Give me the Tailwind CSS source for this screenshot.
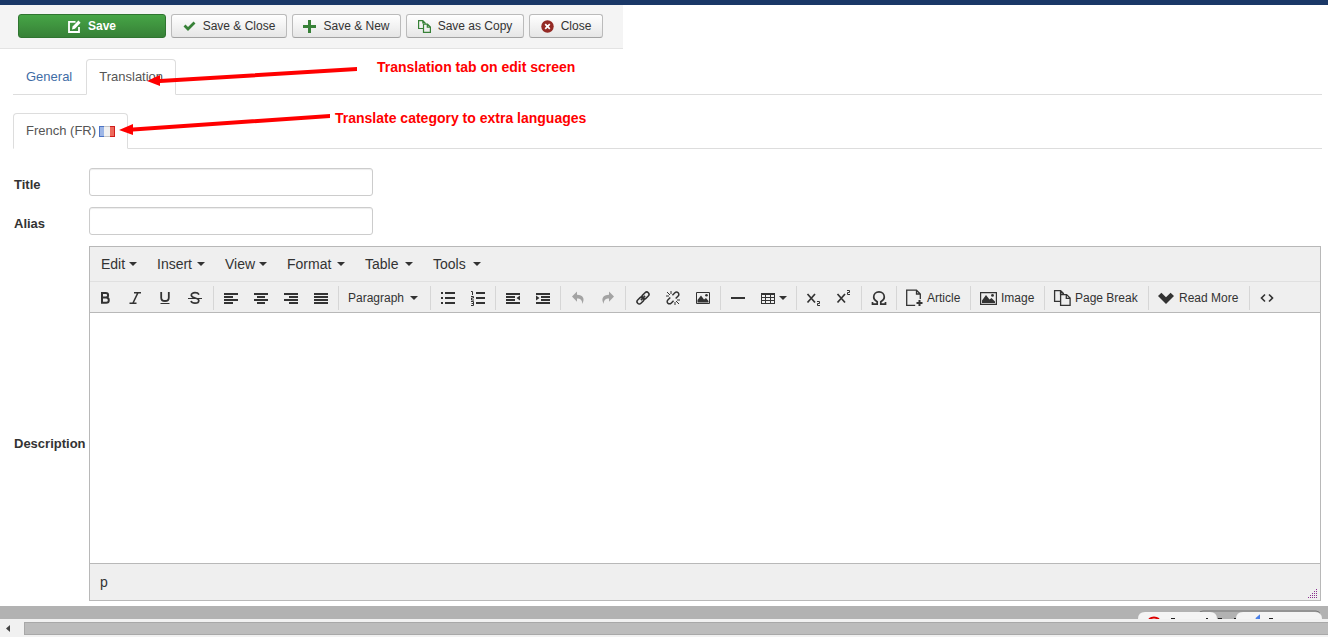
<!DOCTYPE html>
<html lang="en">
<head>
<meta charset="utf-8">
<meta name="viewport" content="width=device-width, initial-scale=1">
<title>Edit category</title>
<script src="https://cdn.jsdelivr.net/npm/@tailwindcss/browser@4"></script>
</head>
<body class="min-h-screen flex flex-col overflow-hidden bg-white text-[13px] leading-[18px] text-[#333] font-['Liberation_Sans',Arial,sans-serif]">
<svg class="hidden">
  <defs>
    <symbol id="bold" viewBox="0 0 18 18"><path d="M6 4h3.800a2.200 2.200 0 0 1 0 4.600H6zM6 8.600h4.200a2.500 2.500 0 0 1 0 5.200H6z" fill="none" stroke="currentColor" stroke-width="2"/></symbol>
    <symbol id="italic" viewBox="0 0 18 18"><path d="M8 3.800h7M3.500 14.200h7M11.800 4l-4.800 10" fill="none" stroke="currentColor" stroke-width="1.600"/></symbol>
    <symbol id="underline" viewBox="0 0 18 18"><path d="M5.200 3v5.700q0 3.300 3.800 3.300t3.800-3.300V3" fill="none" stroke="currentColor" stroke-width="1.800"/><path d="M4.500 14.500h9" stroke="currentColor"/></symbol>
    <symbol id="strike" viewBox="0 0 18 18"><path d="M13 5.600C12.300 4.200 10.900 3.700 9 3.700c-2.100 0-3.700.9-3.700 2.500 0 3.400 7.500 2.100 7.500 5.300 0 1.700-1.600 2.700-3.800 2.700-2 0-3.500-.8-4-2.200" fill="none" stroke="currentColor" stroke-width="1.700"/><path d="M2 9.500h14" stroke="currentColor"/></symbol>
    <symbol id="left" viewBox="0 0 18 18"><path d="M2 4h14v2H2zM2 7h9v2H2zM2 10h14v2H2zM2 13h9v2H2z" fill="currentColor"/></symbol>
    <symbol id="center" viewBox="0 0 18 18"><path d="M2 4h14v2H2zM5 7h8v2H5zM2 10h14v2H2zM5 13h8v2H5z" fill="currentColor"/></symbol>
    <symbol id="right" viewBox="0 0 18 18"><path d="M2 4h14v2H2zM7 7h9v2H7zM2 10h14v2H2zM7 13h9v2H7z" fill="currentColor"/></symbol>
    <symbol id="justify" viewBox="0 0 18 18"><path d="M2 4h14v2H2zM2 7h14v2H2zM2 10h14v2H2zM2 13h14v2H2z" fill="currentColor"/></symbol>
    <symbol id="bullets" viewBox="0 0 18 18"><path d="M6 3h10v2H6zM6 8h10v2H6zM6 13h10v2H6zM2 3h2v2H2zM2 8h2v2H2zM2 13h2v2H2z" fill="currentColor"/></symbol>
    <symbol id="numbers" viewBox="0 0 18 18"><path d="M7 3h9v2H7zM7 8h9v2H7zM7 13h9v2H7z" fill="currentColor"/><path d="M2 2.500h1.500V6M2 7.500h2.500v1.500H2.500v2H5M2 12.500h2.500v4H2M2.500 14.500h2" fill="none" stroke="currentColor"/></symbol>
    <symbol id="outdent" viewBox="0 0 18 18"><path d="M2 4h14v2H2zM2 7h9v2H2zM2 10h9v2H2zM2 13h14v2H2zM16 6.500v5L12.500 9z" fill="currentColor"/></symbol>
    <symbol id="indent" viewBox="0 0 18 18"><path d="M2 4h14v2H2zM7 7h9v2H7zM7 10h9v2H7zM2 13h14v2H2zM2 6.500v5L5.500 9z" fill="currentColor"/></symbol>
    <symbol id="undo" viewBox="0 0 18 18"><path d="M8 2.500v3.300c6 0 8.300 4 5.200 9.200.2-3.700-1.700-5.500-5.200-5.500v3.300L3 7.600z" fill="currentColor"/></symbol>
    <symbol id="redo" viewBox="0 0 18 18"><path d="M10 2.500v3.300c-6 0-8.300 4-5.200 9.200-.2-3.700 1.700-5.500 5.200-5.500v3.300l5-5.200z" fill="currentColor"/></symbol>
    <symbol id="link" viewBox="0 0 18 18"><g fill="none" stroke="currentColor" stroke-width="1.500" transform="rotate(-45 9 9)"><rect x="1.500" y="6.700" width="8" height="4.600" rx="2.300"/><rect x="8.500" y="6.700" width="8" height="4.600" rx="2.300"/><path d="M6 9h6"/></g></symbol>
    <symbol id="unlink" viewBox="0 0 18 18"><g fill="none" stroke="currentColor" stroke-width="1.500" transform="rotate(-45 9 9)"><path d="M7.500 6.700H4a2.300 2.300 0 0 0 0 4.600h3.500M10.500 6.700H14a2.300 2.300 0 0 1 0 4.600h-3.500"/></g><path d="M3 3l3 3M7 2v3M2 7h3M15 15l-3-3M11 16v-3M16 11h-3" stroke="currentColor" fill="none"/></symbol>
    <symbol id="picture" viewBox="0 0 18 18"><path d="M2.500 3.500h13v11h-13z" fill="none" stroke="currentColor"/><path d="M3.500 13.500V11L7 6.500l3 4L12 9l2.500 3v1.500z" fill="currentColor"/><circle cx="12.500" cy="6.200" r="1.300" fill="currentColor"/></symbol>
    <symbol id="rule" viewBox="0 0 18 18"><path d="M2 8h14v2H2z" fill="currentColor"/></symbol>
    <symbol id="table" viewBox="0 0 18 18"><path d="M2 4h14v11H2zM3 6v2h3V6zm4 0v2h4V6zm5 0v2h3V6zM3 9v2h3V9zm4 0v2h4V9zm5 0v2h3V9zM3 12v2h3v-2zm4 0v2h4v-2zm5 0v2h3v-2z" fill="currentColor" fill-rule="evenodd"/></symbol>
    <symbol id="sub" viewBox="0 0 18 18"><path d="M2.500 5l7.500 8.500M10 5l-7.500 8.500" stroke="currentColor" stroke-width="1.700"/><path d="M12 12.500h2.500v2h-2v2H15" fill="none" stroke="currentColor"/></symbol>
    <symbol id="sup" viewBox="0 0 18 18"><path d="M2.500 5l7.500 8.500M10 5l-7.500 8.500" stroke="currentColor" stroke-width="1.700"/><path d="M12 1.500h2.500v2h-2v2H15" fill="none" stroke="currentColor"/></symbol>
    <symbol id="omega" viewBox="0 0 18 18"><path d="M2.500 13v2.200h4.700v-2.500C5.200 11.700 3.700 10.200 3.700 8c0-3 2.300-5.200 5.300-5.200s5.300 2.200 5.300 5.200c0 2.200-1.500 3.700-3.500 4.700v2.500h4.700V13" fill="none" stroke="currentColor" stroke-width="1.700"/></symbol>
    <symbol id="article" viewBox="0 0 18 18"><path d="M15.300 10V5l-3.800-3.800H1.700v15.100h8.500M11.500 1.200V5h3.800" fill="none" stroke="currentColor" stroke-width="1.300"/><path d="M14.500 11v6M11.500 14h6" stroke="currentColor" stroke-width="2"/></symbol>
    <symbol id="photo" viewBox="0 0 18 18"><path d="M1.600 3.600h15.800v11.800H1.600z" fill="none" stroke="currentColor" stroke-width="1.200"/><path d="M3 14v-2.500L7 6l3.500 4.500L12.500 9l3.500 3.500V14z" fill="currentColor"/><circle cx="13.500" cy="6.400" r="1.400" fill="currentColor"/></symbol>
    <symbol id="copy" viewBox="0 0 18 18"><path d="M7.500 12.300H1.600V1.600h6l3.200 3.200M7.500 1.600v3.600H11M7.600 5.600h6l3.500 3.500v7.300H7.600zM13.300 5.600v3.700H17" fill="none" stroke="currentColor" stroke-width="1.300"/></symbol>
    <symbol id="down" viewBox="0 0 18 18"><path d="M1 7l3.400-3.200L9 8.300l4.600-4.500L17 7l-8 8z" fill="currentColor"/></symbol>
    <symbol id="code" viewBox="0 0 18 18"><path d="M7 5.500L3.500 9 7 12.500M11 5.500L14.500 9 11 12.500" fill="none" stroke="currentColor" stroke-width="1.600"/></symbol>
    <symbol id="caret" viewBox="0 0 8 4"><path d="M0 0h8L4 4z" fill="currentColor"/></symbol>
  </defs>
</svg>

<div class="h-[5px] bg-[#1a3867]"></div>
<header class="w-[623px] flex gap-[5px] bg-[#f4f4f4] border-b border-[#e3e3e3] pl-[18px] pt-[9px] pb-[10px] text-xs leading-[18px]">
  <button class="h-6 w-[148px] flex items-center justify-center gap-[7px] rounded-[3px] border border-[#2f7530] bg-linear-to-b from-[#46a546] to-[#378137] text-white font-bold">
    <svg class="w-[13px] h-[13px]" viewBox="0 0 13 13"><path d="M7.500 1.800H1v10.200h10V7" fill="none" stroke="currentColor" stroke-width="1.800"/><path d="M4 9.500l.6-3L10.400.6l2.200 2.200L6.900 8.800z" fill="currentColor"/></svg>Save</button>
  <button class="h-6 w-[116px] flex items-center justify-center gap-[7px] rounded-[3px] border border-[#bbb] border-b-[#a2a2a2] bg-linear-to-b from-white to-[#e6e6e6]">
    <svg class="w-[13px] h-[13px] text-[#378137]" viewBox="0 0 13 13"><path d="M1.500 5.500L5 9l6.500-6.500" fill="none" stroke="currentColor" stroke-width="2.800"/></svg>Save &amp; Close</button>
  <button class="h-6 w-[109px] flex items-center justify-center gap-[7px] rounded-[3px] border border-[#bbb] border-b-[#a2a2a2] bg-linear-to-b from-white to-[#e6e6e6]">
    <svg class="w-[13px] h-[13px] text-[#378137]" viewBox="0 0 13 13"><path d="M5 0h3v5h5v3H8v5H5V8H0V5h5z" fill="currentColor"/></svg>Save &amp; New</button>
  <button class="h-6 w-[118px] flex items-center justify-center gap-[7px] rounded-[3px] border border-[#bbb] border-b-[#a2a2a2] bg-linear-to-b from-white to-[#e6e6e6]">
    <svg class="w-[13px] h-[13px] text-[#378137]" viewBox="0 0 13 13"><path d="M5 8.500H.6V.6h4.200l2.700 2.700M4.800.6v3M5.500 4.100h4l2.900 2.900v5.400H5.500zM9.300 4.100v3h3" fill="none" stroke="currentColor" stroke-width="1.200"/></svg>Save as Copy</button>
  <button class="h-6 w-[74px] flex items-center justify-center gap-[7px] rounded-[3px] border border-[#bbb] border-b-[#a2a2a2] bg-linear-to-b from-white to-[#e6e6e6]">
    <svg class="w-[13px] h-[13px]" viewBox="0 0 13 13"><circle cx="6.500" cy="6.500" r="6.200" fill="#942a25"/><path d="M4.200 4.200l4.600 4.600M8.800 4.200L4.200 8.800" stroke="#fff" stroke-width="1.700"/></svg>Close</button>
</header>

<main class="pl-[13px] pr-[6px]">
  <nav class="mt-[10px] flex items-end border-b border-[#ddd]">
    <a href="#general" class="px-[13px] py-2 text-[#3f6da6] mr-px">General</a>
    <a href="#translation" class="-mb-px px-3 py-2 rounded-t-[4px] border border-[#ddd] border-b-white bg-white text-[#555]">Translation</a>
  </nav>
  <nav class="mt-[18px] flex items-end border-b border-[#ddd]">
    <a href="#french" class="-mb-px px-3 py-2 rounded-t-[4px] border border-[#ddd] border-b-white bg-white text-[#555] flex items-center gap-[3px]">French (FR)
      <svg class="w-4 h-[11px]" viewBox="0 0 16 11"><path d="M0 0h6v11H0z" fill="#4c73c4"/><path d="M1 1h4v9H1z" fill="#9db6e6"/><path d="M5 0h6v11H5z" fill="#c5c5c5"/><path d="M5 1h6v9H5z" fill="#f1f1f1"/><path d="M11 0h5v11h-5z" fill="#d01c1c"/><path d="M11 1h4v9h-4z" fill="#ee6a5c"/></svg></a>
  </nav>

  <form class="mt-[19px] grid grid-cols-[76px_1fr] gap-y-[11px] items-center">
    <label for="title" class="pl-px pt-[6px] font-bold">Title</label>
    <input id="title" type="text" class="h-7 w-[284px] rounded-[3px] border border-[#ccc] bg-white px-[6px] shadow-[inset_0_1px_1px_rgba(0,0,0,0.075)]">
    <label for="alias" class="pl-px pt-[6px] font-bold">Alias</label>
    <input id="alias" type="text" class="h-7 w-[284px] rounded-[3px] border border-[#ccc] bg-white px-[6px] shadow-[inset_0_1px_1px_rgba(0,0,0,0.075)]">
    <label for="description" class="pl-px pt-10 font-bold">Description</label>

    <div class="border border-[#b8b8b8] bg-[#efefef] mr-px min-w-0">
      <div class="flex h-[35px] items-center pl-px border-b border-[#e0e0e0] text-sm">
        <button type="button" class="w-14 px-[10px] flex items-center justify-between">Edit<svg class="w-2 h-1"><use href="#caret"/></svg></button>
        <button type="button" class="w-[68px] px-[10px] flex items-center justify-between">Insert<svg class="w-2 h-1"><use href="#caret"/></svg></button>
        <button type="button" class="w-[62px] px-[10px] flex items-center justify-between">View<svg class="w-2 h-1"><use href="#caret"/></svg></button>
        <button type="button" class="w-[78px] px-[10px] flex items-center justify-between">Format<svg class="w-2 h-1"><use href="#caret"/></svg></button>
        <button type="button" class="w-[68px] px-[10px] flex items-center justify-between">Table<svg class="w-2 h-1"><use href="#caret"/></svg></button>
        <button type="button" class="w-[68px] px-[10px] flex items-center justify-between">Tools<svg class="w-2 h-1"><use href="#caret"/></svg></button>
      </div>
      <div class="flex h-[31px] items-center pt-px border-b border-[#b8b8b8] text-xs whitespace-nowrap">
        <div class="flex h-6 items-center pr-[3px] border-r border-[#d6d6d6]">
          <button type="button" aria-label="Bold" class="w-[30px] flex justify-center"><svg class="w-[18px] h-[18px]"><use href="#bold"/></svg></button>
          <button type="button" aria-label="Italic" class="w-[30px] flex justify-center"><svg class="w-[18px] h-[18px]"><use href="#italic"/></svg></button>
          <button type="button" aria-label="Underline" class="w-[30px] flex justify-center"><svg class="w-[18px] h-[18px]"><use href="#underline"/></svg></button>
          <button type="button" aria-label="Strikethrough" class="w-[30px] flex justify-center"><svg class="w-[18px] h-[18px]"><use href="#strike"/></svg></button>
        </div>
        <div class="flex h-6 items-center px-[2px] border-r border-[#d6d6d6]">
          <button type="button" aria-label="Align left" class="w-[30px] flex justify-center"><svg class="w-[18px] h-[18px]"><use href="#left"/></svg></button>
          <button type="button" aria-label="Align center" class="w-[30px] flex justify-center"><svg class="w-[18px] h-[18px]"><use href="#center"/></svg></button>
          <button type="button" aria-label="Align right" class="w-[30px] flex justify-center"><svg class="w-[18px] h-[18px]"><use href="#right"/></svg></button>
          <button type="button" aria-label="Justify" class="w-[30px] flex justify-center"><svg class="w-[18px] h-[18px]"><use href="#justify"/></svg></button>
        </div>
        <div class="relative flex h-6 items-center px-[2px] border-r border-[#d6d6d6]">
          <select aria-label="Block format" class="appearance-none w-[87px] h-6 pl-[7px] bg-transparent"><option>Paragraph</option><option>Heading 1</option></select>
          <svg class="absolute right-3 w-2 h-1 pointer-events-none"><use href="#caret"/></svg>
        </div>
        <div class="flex h-6 items-center px-[2px] border-r border-[#d6d6d6]">
          <button type="button" aria-label="Bullet list" class="w-[30px] flex justify-center"><svg class="w-[18px] h-[18px]"><use href="#bullets"/></svg></button>
          <button type="button" aria-label="Numbered list" class="w-[30px] flex justify-center"><svg class="w-[18px] h-[18px]"><use href="#numbers"/></svg></button>
        </div>
        <div class="flex h-6 items-center px-[2px] border-r border-[#d6d6d6]">
          <button type="button" aria-label="Decrease indent" class="w-[30px] flex justify-center"><svg class="w-[18px] h-[18px]"><use href="#outdent"/></svg></button>
          <button type="button" aria-label="Increase indent" class="w-[30px] flex justify-center"><svg class="w-[18px] h-[18px]"><use href="#indent"/></svg></button>
        </div>
        <div class="flex h-6 items-center px-[2px] border-r border-[#d6d6d6]">
          <button type="button" aria-label="Undo" class="w-[30px] flex justify-center text-[#a3a3a3]"><svg class="w-[18px] h-[18px]"><use href="#undo"/></svg></button>
          <button type="button" aria-label="Redo" class="w-[30px] flex justify-center text-[#a3a3a3]"><svg class="w-[18px] h-[18px]"><use href="#redo"/></svg></button>
        </div>
        <div class="flex h-6 items-center px-[2px] border-r border-[#d6d6d6]">
          <button type="button" aria-label="Insert link" class="w-[30px] flex justify-center"><svg class="w-[18px] h-[18px]"><use href="#link"/></svg></button>
          <button type="button" aria-label="Remove link" class="w-[30px] flex justify-center"><svg class="w-[18px] h-[18px]"><use href="#unlink"/></svg></button>
          <button type="button" aria-label="Insert image" class="w-[30px] flex justify-center"><svg class="w-[18px] h-[18px]"><use href="#picture"/></svg></button>
        </div>
        <div class="flex h-6 items-center px-[2px] border-r border-[#d6d6d6]">
          <button type="button" aria-label="Horizontal line" class="w-[30px] flex justify-center"><svg class="w-[18px] h-[18px]"><use href="#rule"/></svg></button>
          <button type="button" aria-label="Table" class="w-[41px] pl-[6px] flex items-center gap-[2px]"><svg class="w-[18px] h-[18px]"><use href="#table"/></svg><svg class="w-2 h-1"><use href="#caret"/></svg></button>
        </div>
        <div class="flex h-6 items-center px-[2px] border-r border-[#d6d6d6]">
          <button type="button" aria-label="Subscript" class="w-[30px] flex justify-center"><svg class="w-[18px] h-[18px]"><use href="#sub"/></svg></button>
          <button type="button" aria-label="Superscript" class="w-[30px] flex justify-center"><svg class="w-[18px] h-[18px]"><use href="#sup"/></svg></button>
        </div>
        <div class="flex h-6 items-center px-[2px] border-r border-[#d6d6d6]">
          <button type="button" aria-label="Special character" class="w-[30px] flex justify-center"><svg class="w-[18px] h-[18px]"><use href="#omega"/></svg></button>
        </div>
        <div class="flex h-6 items-center px-[2px] border-r border-[#d6d6d6]">
          <button type="button" class="w-[69px] pl-[6px] flex items-center gap-1"><svg class="w-[18px] h-[18px]"><use href="#article"/></svg>Article</button>
        </div>
        <div class="flex h-6 items-center px-[2px] border-r border-[#d6d6d6]">
          <button type="button" class="w-[69px] pl-[6px] flex items-center gap-1"><svg class="w-[18px] h-[18px]"><use href="#photo"/></svg>Image</button>
        </div>
        <div class="flex h-6 items-center px-[2px] border-r border-[#d6d6d6]">
          <button type="button" class="w-[99px] pl-[6px] flex items-center gap-1"><svg class="w-[18px] h-[18px]"><use href="#copy"/></svg>Page Break</button>
        </div>
        <div class="flex h-6 items-center px-[2px] border-r border-[#d6d6d6]">
          <button type="button" class="w-[96px] pl-[6px] flex items-center gap-1"><svg class="w-[18px] h-[18px]"><use href="#down"/></svg>Read More</button>
        </div>
        <div class="flex h-6 items-center px-[2px]">
          <button type="button" aria-label="Source code" class="w-[30px] flex justify-center"><svg class="w-[18px] h-[18px]"><use href="#code"/></svg></button>
        </div>
      </div>
      <textarea id="description" class="block w-full h-[250px] resize-none bg-white p-2 outline-none"></textarea>
      <div class="flex items-end justify-between h-[37px] border-t border-[#b8b8b8] pl-[10px] pr-[3px] pb-[2px] text-sm">
        <span class="pb-[6px]">p</span>
        <svg class="w-[10px] h-[10px]" viewBox="0 0 10 10" fill="#8a2f8f" shape-rendering="crispEdges"><path d="M9 1h1v1H9zM7 3h1v1H7zM9 3h1v1H9zM5 5h1v1H5zM7 5h1v1H7zM9 5h1v1H9zM3 7h1v1H3zM5 7h1v1H5zM7 7h1v1H7zM9 7h1v1H9zM1 9h1v1H1zM3 9h1v1H3zM5 9h1v1H5zM7 9h1v1H7zM9 9h1v1H9z"/></svg>
      </div>
    </div>
  </form>
</main>

<footer class="mt-[5px]">
  <div class="h-[13px] bg-[#b2b2b2] flex justify-end pr-[5px]">
    <svg class="w-[186px] h-[13px]" viewBox="0 0 186 13">
      <path d="M62 13V8q0-3 4-3h113q4 0 4 4" fill="none" stroke="#777"/>
      <path d="M1 13q0-7 7-7h65q7 0 7 7z" fill="#f4f4f4"/>
      <path d="M99 13q0-7 7-7h72q7 0 7 7z" fill="#f4f4f4"/>
      <path d="M12 13q5-3 10 0" fill="none" stroke="#d00" stroke-width="2"/>
      <path d="M34 12.500h4M69 12.500h2M81 12.500h4M97 12.500h2M132 12.500h4" stroke="#222"/>
      <path d="M119 13l3-2.500V13" fill="none" stroke="#4a80e8" stroke-width="2"/>
    </svg>
  </div>
  <div class="h-[18px] bg-[#f1f1f1] flex items-center" role="scrollbar" aria-controls="description" aria-orientation="horizontal" aria-valuenow="0">
    <svg class="w-6 h-[9px] shrink-0" viewBox="0 0 24 9"><path d="M10 1v7L6 4.500z" fill="#444"/></svg>
    <div class="h-[13px] flex-1 border border-r-0 border-[#a8a8a8] bg-[#bcbcbc]"></div>
  </div>
</footer>

<!-- Callouts over the two tab rows -->
<div class="absolute left-[377px] top-[58px] text-sm leading-[18px] font-bold text-[#f00]">Translation tab on edit screen</div>
<div class="absolute left-[335px] top-[109px] text-sm leading-[18px] font-bold text-[#f00]">Translate category to extra languages</div>
<svg class="absolute left-[115px] top-[60px] w-[250px] h-20 pointer-events-none" viewBox="0 0 250 80" fill="#f00">
  <path d="M32 21L45 15v4L242 7v4L45 23v3z"/>
  <path d="M4 70L18 64v3.500L215 54v4L18 71.500V75z"/>
</svg>
</body>
</html>
